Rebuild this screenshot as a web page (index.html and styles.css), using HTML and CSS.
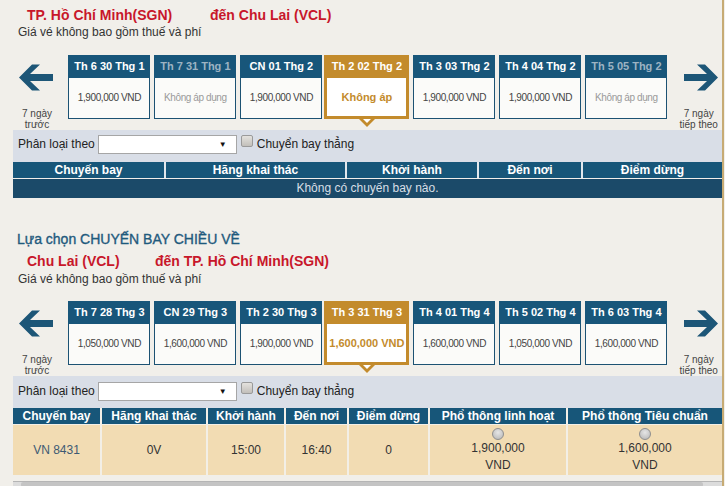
FILE: index.html
```html
<!DOCTYPE html>
<html lang="vi">
<head>
<meta charset="utf-8">
<title>Chọn chuyến bay</title>
<link rel="stylesheet" href="styles.css">
</head>
<body>
<div class="page">
  <section class="leg">
    <div class="route"><span class="city from-1">TP. Hồ Chí Minh(SGN)</span><span class="city">đến Chu Lai (VCL)</span></div>
    <div class="note">Giá vé không bao gồm thuế và phí</div>
    <div class="dates">
      <div class="nav nav-prev">
        <svg class="arrow" width="34" height="29" viewBox="0 0 34 29"><path d="M0 14.5 L13 1.5 L21 1.5 L11 11 L34 11 L34 18 L11 18 L21 27.5 L13 27.5 Z"/></svg>
        <div class="nav-lbl">7 ngày<br>trước</div>
      </div>
      <div class="card"><div class="card-h">Th 6 30 Thg 1</div><div class="card-b">1,900,000 VND</div></div>
      <div class="card off"><div class="card-h">Th 7 31 Thg 1</div><div class="card-b">Không áp dụng</div></div>
      <div class="card"><div class="card-h">CN 01 Thg 2</div><div class="card-b">1,900,000 VND</div></div>
      <div class="card sel"><div class="card-h">Th 2 02 Thg 2</div><div class="card-b">Không áp</div><span class="tip"></span></div>
      <div class="card"><div class="card-h">Th 3 03 Thg 2</div><div class="card-b">1,900,000 VND</div></div>
      <div class="card"><div class="card-h">Th 4 04 Thg 2</div><div class="card-b">1,900,000 VND</div></div>
      <div class="card off"><div class="card-h">Th 5 05 Thg 2</div><div class="card-b">Không áp dụng</div></div>
      <div class="nav nav-next">
        <svg class="arrow" width="34" height="29" viewBox="0 0 34 29"><path d="M34 14.5 L21 1.5 L13 1.5 L23 11 L0 11 L0 18 L23 18 L13 27.5 L21 27.5 Z"/></svg>
        <div class="nav-lbl">7 ngày<br>tiếp theo</div>
      </div>
    </div>
    <div class="filter">
      <span class="flabel">Phân loại theo</span>
      <div class="select"><span class="caret">▼</span></div>
      <span class="check"></span>
      <span class="flabel">Chuyển bay thẳng</span>
    </div>
    <div class="grid grid-out">
      <div class="th">Chuyến bay</div>
      <div class="th">Hãng khai thác</div>
      <div class="th">Khởi hành</div>
      <div class="th">Đến nơi</div>
      <div class="th">Điểm dừng</div>
    </div>
    <div class="empty">Không có chuyến bay nào.</div>
  </section>

  <section class="leg">
    <div class="leg-title">Lựa chọn CHUYẾN BAY CHIỀU VỀ</div>
    <div class="route route-2"><span class="city from-2">Chu Lai (VCL)</span><span class="city">đến TP. Hồ Chí Minh(SGN)</span></div>
    <div class="note">Giá vé không bao gồm thuế và phí</div>
    <div class="dates">
      <div class="nav nav-prev">
        <svg class="arrow" width="34" height="29" viewBox="0 0 34 29"><path d="M0 14.5 L13 1.5 L21 1.5 L11 11 L34 11 L34 18 L11 18 L21 27.5 L13 27.5 Z"/></svg>
        <div class="nav-lbl">7 ngày<br>trước</div>
      </div>
      <div class="card"><div class="card-h">Th 7 28 Thg 3</div><div class="card-b">1,050,000 VND</div></div>
      <div class="card"><div class="card-h">CN 29 Thg 3</div><div class="card-b">1,600,000 VND</div></div>
      <div class="card"><div class="card-h">Th 2 30 Thg 3</div><div class="card-b">1,900,000 VND</div></div>
      <div class="card sel"><div class="card-h">Th 3 31 Thg 3</div><div class="card-b">1,600,000 VND</div><span class="tip"></span></div>
      <div class="card"><div class="card-h">Th 4 01 Thg 4</div><div class="card-b">1,600,000 VND</div></div>
      <div class="card"><div class="card-h">Th 5 02 Thg 4</div><div class="card-b">1,050,000 VND</div></div>
      <div class="card"><div class="card-h">Th 6 03 Thg 4</div><div class="card-b">1,600,000 VND</div></div>
      <div class="nav nav-next">
        <svg class="arrow" width="34" height="29" viewBox="0 0 34 29"><path d="M34 14.5 L21 1.5 L13 1.5 L23 11 L0 11 L0 18 L23 18 L13 27.5 L21 27.5 Z"/></svg>
        <div class="nav-lbl">7 ngày<br>tiếp theo</div>
      </div>
    </div>
    <div class="filter">
      <span class="flabel">Phân loại theo</span>
      <div class="select"><span class="caret">▼</span></div>
      <span class="check"></span>
      <span class="flabel">Chuyển bay thẳng</span>
    </div>
    <div class="grid grid-ret">
      <div class="th">Chuyến bay</div>
      <div class="th">Hãng khai thác</div>
      <div class="th">Khởi hành</div>
      <div class="th">Đến nơi</div>
      <div class="th">Điểm dừng</div>
      <div class="th">Phổ thông linh hoạt</div>
      <div class="th">Phổ thông Tiêu chuẩn</div>
      <div class="td flight">VN 8431</div>
      <div class="td">0V</div>
      <div class="td">15:00</div>
      <div class="td">16:40</div>
      <div class="td">0</div>
      <div class="td fare"><span class="radio"></span><span class="price">1,900,000</span><span class="price">VND</span></div>
      <div class="td fare"><span class="radio"></span><span class="price">1,600,000</span><span class="price">VND</span></div>
    </div>
    <div class="scrollbar"><div class="thumb"></div></div>
  </section>
</div>
</body>
</html>
```

FILE: styles.css
```css
html, body {
  margin: 0;
  padding: 0;
}
body {
  width: 725px;
  height: 486px;
  overflow: hidden;
  background: #f1efea;
  font-family: "Liberation Sans", Arial, sans-serif;
  color: #333;
}
.page {
  width: 724px;
  height: 486px;
  box-sizing: border-box;
  padding-left: 13px;
  border-right: 2px solid #c7ab74;
}

.route {
  padding: 6px 0 0 14px;
  font-size: 14px;
  font-weight: bold;
  line-height: 18px;
  color: #c8172a;
  white-space: nowrap;
}
.route-2 {
  padding-top: 4px;
}
.city {
  display: inline-block;
}
.from-1 { width: 183px; }
.from-2 { width: 128px; }

.note {
  margin-top: 1px;
  padding-left: 5px;
  font-size: 12px;
  line-height: 14px;
  color: #333;
}
.route-2 + .note {
  margin-top: 2px;
}

.leg-title {
  margin-top: 33px;
  padding-left: 4px;
  font-size: 14px;
  line-height: 17px;
  color: #1f5a7d;
  -webkit-text-stroke: 0.35px #1f5a7d;
}

.dates {
  display: flex;
  align-items: flex-start;
  margin-top: 16px;
}
.leg-title ~ .dates {
  margin-top: 15px;
}

.nav {
  display: flex;
  flex-direction: column;
}
.nav-prev {
  width: 57px;
}
.nav-next {
  width: 48px;
  margin-left: 3px;
  padding-left: 5px;
}
.arrow {
  display: block;
  margin-top: 8px;
  fill: #1d5677;
}
.nav-prev .arrow { margin-left: 6px; }
.nav-next .arrow { margin-left: 9px; }
.nav-lbl {
  margin-top: 16px;
  font-size: 10px;
  line-height: 11px;
  color: #444;
  text-align: center;
  white-space: nowrap;
}
.nav-prev .nav-lbl { width: 48px; }

.card {
  position: relative;
  width: 82px;
  margin-left: 4px;
  flex: none;
}
.nav-prev + .card { margin-left: 0; }
.card-h {
  height: 23px;
  background: #18567a;
  color: #fff;
  font-size: 11px;
  font-weight: bold;
  line-height: 23px;
  text-align: center;
  white-space: nowrap;
  overflow: hidden;
}
.card-b {
  height: 41px;
  box-sizing: border-box;
  border: 1px solid #1c5273;
  border-top: 0;
  background: #fbfbf9;
  font-size: 10px;
  letter-spacing: -0.4px;
  line-height: 40px;
  text-align: center;
  color: #444;
  white-space: nowrap;
  overflow: hidden;
}
.card.off .card-h { color: #9db3c3; }
.card.off .card-b { color: #9a9a9a; }

.card.sel {
  width: 85px;
  margin-left: 2px;
}
.card.sel + .card { margin-left: 4px; }
.card.sel .card-h { background: #c38b2c; }
.card.sel .card-b {
  border: 3px solid #c38b2c;
  border-top: 0;
  background: #fff;
  color: #c38b2c;
  font-size: 11px;
  font-weight: bold;
  letter-spacing: 0;
  line-height: 38px;
}
.tip {
  position: absolute;
  left: 50%;
  top: 100%;
  margin-left: -8px;
  width: 0;
  height: 0;
  border-left: 8px solid transparent;
  border-right: 8px solid transparent;
  border-top: 8px solid #c38b2c;
}
.tip::after {
  content: "";
  position: absolute;
  left: -4px;
  top: -8px;
  width: 0;
  height: 0;
  border-left: 4px solid transparent;
  border-right: 4px solid transparent;
  border-top: 4px solid #fff;
}

.filter {
  display: flex;
  align-items: flex-start;
  height: 32px;
  box-sizing: border-box;
  padding: 5px 0 0 5px;
  background: #d9dee7;
}
.leg-title ~ .filter {
  padding-top: 6px;
}
.flabel {
  font-size: 12px;
  line-height: 18px;
  color: #222;
  white-space: nowrap;
}
.select {
  position: relative;
  width: 139px;
  height: 19px;
  box-sizing: border-box;
  margin-left: 3px;
  border: 1px solid #a6a6a6;
  background: #fff;
}
.caret {
  position: absolute;
  right: 9px;
  top: 3px;
  font-size: 8px;
  line-height: 11px;
  color: #111;
}
.check {
  width: 12px;
  height: 12px;
  box-sizing: border-box;
  margin: 0 4px 0 4px;
  border: 1px solid #9a9a9a;
  border-radius: 2px;
  background: linear-gradient(#e4e2de, #c2bfba);
}

.grid {
  display: grid;
  column-gap: 2px;
  row-gap: 1px;
  background: #e2e8ec;
}
.grid-out {
  grid-template-columns: 151px 179px 130px 102px 139px;
}
.grid-ret {
  grid-template-columns: 87px 104px 76px 61px 79px 136px 154px;
  grid-template-rows: 16px 50px;
  row-gap: 1px;
  background: #f3efe6;
}
.th {
  height: 16px;
  background: #175679;
  color: #fff;
  font-size: 12px;
  font-weight: bold;
  line-height: 16px;
  text-align: center;
  white-space: nowrap;
}
.empty {
  margin-top: 1px;
  height: 19px;
  background: #1b4a69;
  color: #d8dfe6;
  font-size: 12px;
  line-height: 19px;
  text-align: center;
}
.td {
  display: flex;
  align-items: center;
  justify-content: center;
  background: #f2dcb3;
  font-size: 12px;
  color: #333;
}
.td.flight { color: #3d5a73; }
.td.fare {
  flex-direction: column;
  justify-content: flex-start;
  padding-top: 3px;
  box-sizing: border-box;
}
.radio {
  width: 12px;
  height: 12px;
  box-sizing: border-box;
  border: 1px solid #8f8f8f;
  border-radius: 50%;
  background: radial-gradient(circle at 50% 35%, #e6e6e6, #b4b4b4);
}
.price {
  line-height: 17px;
}

.scrollbar {
  margin-top: 6px;
  height: 5px;
  background: #dcdcdc;
  border-top: 1px solid #b5b5b5;
  padding-left: 8px;
}
.thumb {
  width: 682px;
  height: 5px;
  background: #c4c4c4;
  border-radius: 2px;
}
```
